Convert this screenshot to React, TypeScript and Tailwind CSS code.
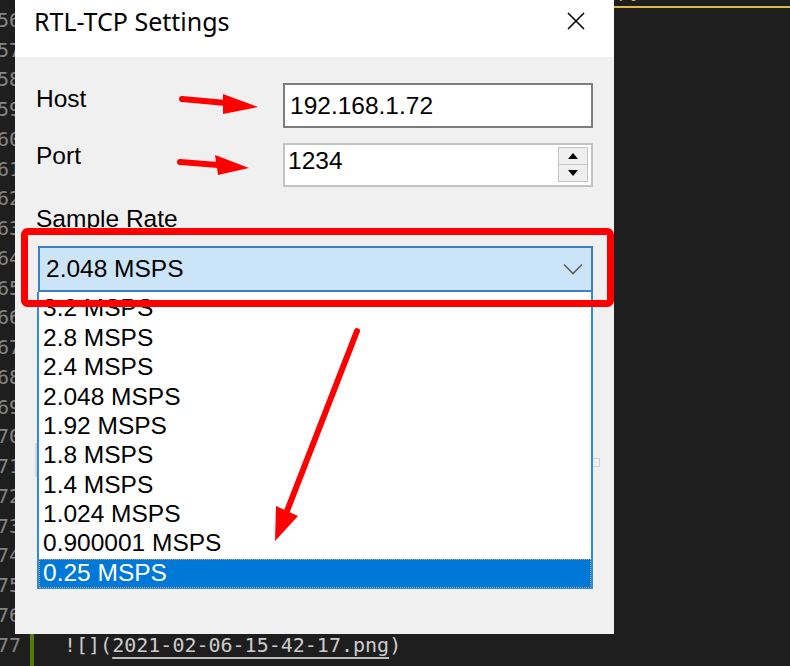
import React from 'react';

const RATES = [
  '3.2 MSPS',
  '2.8 MSPS',
  '2.4 MSPS',
  '2.048 MSPS',
  '1.92 MSPS',
  '1.8 MSPS',
  '1.4 MSPS',
  '1.024 MSPS',
  '0.900001 MSPS',
  '0.25 MSPS',
];

const CODE: Record<number, string> = {
  55: 'Enter the IP address of the rtl_tcp box and copy  ,',
  77: '![](2021-02-06-15-42-17.png)',
  78: '![](2021-02-06-15-44-10.png)',
};

const LINES = Array.from({ length: 24 }, (_, i) => 55 + i);

function CodeText({ n }: { n: number }) {
  const text = CODE[n];
  if (!text) return null;
  if (n === 55) return <span className="text-[#d9b048]">{text}</span>;
  const file = text.slice(4, -1);
  return (
    <span className="text-[#cccccc]">
      ![](
      <span className="underline decoration-[#bdbdbd] decoration-2 underline-offset-[5px]">{file}</span>)
    </span>
  );
}

function Editor() {
  return (
    <div className="mt-[-24px] flex flex-col font-['DejaVu_Sans_Mono',monospace] text-[20px] leading-[29.75px]">
      {LINES.map((n) => (
        <div key={n} className="flex h-[29.75px] items-center">
          <div className="flex w-[21px] shrink-0 justify-end text-[#858585]">{n}</div>
          <div className={`ml-[9px] h-full w-[4px] shrink-0 ${n >= 77 ? 'bg-[#587c0c]' : ''}`} />
          <div
            className={`ml-[30px] flex h-full flex-1 items-center whitespace-pre ${
              n === 56 ? 'border-t-2 border-[#d7ba4a]' : ''
            }`}
          >
            <CodeText n={n} />
          </div>
        </div>
      ))}
    </div>
  );
}

function Spinner() {
  return (
    <div className="mb-[3px] mr-[3px] mt-[2px] flex w-[30px] flex-col">
      <div className="flex flex-1 items-center justify-center border border-[#c4c4c4] bg-[#efefef]">
        <svg width="10" height="6" viewBox="0 0 10 6">
          <path d="M5 0L10 6H0z" fill="#000" />
        </svg>
      </div>
      <div className="flex flex-1 items-center justify-center border border-t-0 border-[#c4c4c4] bg-[#efefef]">
        <svg width="10" height="6" viewBox="0 0 10 6">
          <path d="M0 0H10L5 6z" fill="#000" />
        </svg>
      </div>
    </div>
  );
}

function SettingsDialog() {
  return (
    <div className="absolute left-[15px] top-0 flex h-[634px] w-[599px] flex-col bg-[#f0f0f0] font-['Liberation_Sans',Arial,sans-serif] text-black">
      {/* Title bar */}
      <div className="flex h-[57px] shrink-0 items-start justify-between bg-white pl-[19px] pr-[29px]">
        <span className="pt-[9px] font-['Noto_Sans',sans-serif] text-[25px] leading-[25px]">RTL-TCP Settings</span>
        <svg className="mt-[12px]" width="18" height="18" viewBox="0 0 18 18">
          <path d="M1 1L17 17M17 1L1 17" stroke="#000" strokeWidth="1.6" />
        </svg>
      </div>

      {/* Form */}
      <div className="flex flex-1 flex-col px-[21px] text-[24.5px] leading-[30px]">
        <div className="mt-[26px] flex items-start justify-between">
          <span className="mt-[1px]">Host</span>
          <div className="flex h-[45px] w-[310px] items-center border-2 border-[#7d7d7d] bg-white pl-[5px]">
            192.168.1.72
          </div>
        </div>

        <div className="mt-[15px] flex items-start justify-between">
          <span className="mt-[-2px]">Port</span>
          <div className="flex h-[44px] w-[310px] border-2 border-[#c3c3c3] bg-white">
            <div className="flex-1 pl-[3px] pt-[1px]">1234</div>
            <Spinner />
          </div>
        </div>

        <span className="mt-[17px]">Sample Rate</span>

        <div className="ml-[2px] mt-[12px] flex h-[46px] items-center justify-between border-2 border-[#3d7fc1] bg-[#cce4f7] pl-[6px] pr-[8px]">
          <span>2.048 MSPS</span>
          <svg width="20" height="12" viewBox="0 0 20 12">
            <path d="M1 1.5L10 10.5L19 1.5" fill="none" stroke="#5f5f5f" strokeWidth="1.6" />
          </svg>
        </div>
      </div>

      {/* Controls behind the open list */}
      <div className="absolute left-[20px] top-[443px] h-[34px] w-[2px] bg-[#d6d6d6]" />
      <div className="absolute left-[577px] top-[458px] h-[9px] w-[8px] border border-[#d0d0d0]" />

      {/* Dropdown list */}
      <div className="absolute left-[22px] top-[292px] flex w-[556px] flex-col border-x-2 border-b border-[#2f8be0] bg-white pt-[2px] text-[24.5px]">
        {RATES.map((r, i) =>
          i === RATES.length - 1 ? (
            <div
              key={r}
              className="flex h-[29.4px] items-center border border-dotted border-[#d9a066] bg-[#0078d7] pl-[3px] text-white"
            >
              {r}
            </div>
          ) : (
            <div key={r} className="flex h-[29.4px] items-center pl-[4px]">
              {r}
            </div>
          )
        )}
      </div>
    </div>
  );
}

function Annotations() {
  return (
    <svg className="pointer-events-none absolute left-0 top-0" width="790" height="666" viewBox="0 0 790 666">
      <rect x="24.5" y="231.5" width="586" height="72" rx="3" fill="none" stroke="#ff0000" strokeWidth="7" />
      <g stroke="#ff0000" strokeWidth="6" strokeLinecap="round">
        <line x1="182" y1="99" x2="226" y2="103" />
        <line x1="180" y1="162" x2="218" y2="165" />
        <line x1="357" y1="331" x2="287" y2="511" />
      </g>
      <g fill="#ff0000">
        <polygon points="223,94 258,107 223,114" />
        <polygon points="215,155 249,168 218,175" />
        <polygon points="298,516 275,541 276,506" />
      </g>
    </svg>
  );
}

export default function App() {
  return (
    <div className="relative h-[666px] w-[790px] overflow-hidden bg-[#1e1e1e]">
      <Editor />
      <SettingsDialog />
      <Annotations />
    </div>
  );
}
